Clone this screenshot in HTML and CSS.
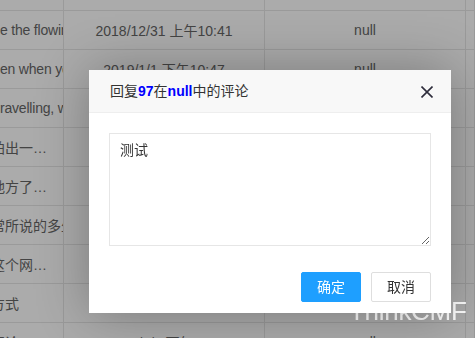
FILE: index.html
```html
<!DOCTYPE html>
<html>
<head>
<meta charset="utf-8">
<link rel="stylesheet" href="styles.css">
</head>
<body>

	<div class="grid">
		<div class="row">
			<div class="cell first"></div><div class="cell">2018/12/30 下午9:12</div><div class="cell">null</div><div class="cell"></div>
		</div>
		<div class="row">
			<div class="cell first">e the flowing</div><div class="cell">2018/12/31 上午10:41</div><div class="cell">null</div><div class="cell"></div>
		</div>
		<div class="row">
			<div class="cell first">en when you</div><div class="cell">2019/1/1 下午10:47</div><div class="cell">null</div><div class="cell"></div>
		</div>
		<div class="row">
			<div class="cell first">ravelling, we</div><div class="cell">2019/1/2 上午9:05</div><div class="cell">null</div><div class="cell"></div>
		</div>
		<div class="row">
			<div class="cell first shift">拍出一…</div><div class="cell">2019/1/3 上午11:20</div><div class="cell">null</div><div class="cell"></div>
		</div>
		<div class="row">
			<div class="cell first shift">地方了…</div><div class="cell">2019/1/4 下午3:18</div><div class="cell">null</div><div class="cell"></div>
		</div>
		<div class="row">
			<div class="cell first shift">常所说的多少</div><div class="cell">2019/1/5 下午4:02</div><div class="cell">null</div><div class="cell"></div>
		</div>
		<div class="row">
			<div class="cell first shift">这个网…</div><div class="cell">2019/1/6 上午8:44</div><div class="cell">null</div><div class="cell"></div>
		</div>
		<div class="row">
			<div class="cell first shift">方式</div><div class="cell">2019/1/7 下午2:36</div><div class="cell">null</div><div class="cell"></div>
		</div>
		<div class="row">
			<div class="cell first shift">评论</div><div class="cell">2019/1/8 下午5:50</div><div class="cell">null</div><div class="cell"></div>
		</div>
	</div>

	<!--
		Shade + watermark
	-->
	<div class="shade"></div>
	<div class="watermark">ThinkCMF</div>

	<!--
		Reply dialog
	-->
	<div class="layer">
		<div class="layer-title">
			回复<b>97</b>在<b>null</b>中的评论
			<a href="#" class="layer-close">
				<svg width="12" height="12" viewBox="0 0 12 12"><path d="M0.5 0.5 L11.5 11.5 M11.5 0.5 L0.5 11.5" stroke="#2e2d3c" stroke-width="1.6" fill="none"/></svg>
			</a>
		</div>
		<div class="layer-content">
			<textarea class="reply">测试</textarea>
		</div>
		<div class="layer-btns">
			<a href="#" class="btn btn-ok">确定</a>
			<a href="#" class="btn">取消</a>
		</div>
	</div>

</body>
</html>
```

FILE: styles.css
```css
body
{
	margin: 0;
	padding: 0;
	background-color: white;
	font-family: "Liberation Sans", "Noto Sans CJK SC", sans-serif;
	font-size: 14px;
	color: #666;
	overflow: hidden;
}

/*
	Table behind the shade
*/
.grid
{
	margin-top: -28px;
}
.row
{
	display: grid;
	grid-template-columns: 64px 201px 201px 1fr;
	height: 39px;
	border-bottom: 1px solid #e6e6e6;
	box-sizing: border-box;
}
.cell
{
	border-right: 1px solid #e6e6e6;
	display: flex;
	align-items: center;
	justify-content: center;
	white-space: nowrap;
	overflow: hidden;
}
.cell.first
{
	justify-content: flex-start;
	letter-spacing: -0.2px;
}
.cell.shift
{
	text-indent: -9px;
	letter-spacing: 0;
}

/*
	Shade
*/
.shade
{
	position: fixed;
	top: 0;
	left: 0;
	width: 100%;
	height: 100%;
	background-color: rgba(0, 0, 0, 0.33);
}
.watermark
{
	position: absolute;
	left: 349px;
	top: 296px;
	font-size: 26px;
	color: white;
	letter-spacing: -0.3px;
}

/*
	Layer
*/
.layer
{
	position: absolute;
	top: 70px;
	left: 89px;
	width: 362px;
	background-color: white;
	box-shadow: 1px 1px 50px rgba(0, 0, 0, 0.3);
}
.layer-title
{
	position: relative;
	height: 42px;
	line-height: 42px;
	padding: 0 80px 0 21px;
	background-color: #f8f8f8;
	border-bottom: 1px solid #eee;
	color: #333;
	font-size: 14px;
}
.layer-title b
{
	color: #00f;
}
.layer-close
{
	position: absolute;
	right: 18px;
	top: 16px;
	width: 12px;
	height: 12px;
	display: flex;
}
.layer-content
{
	padding: 20px 20px 0;
}
.reply
{
	display: block;
	width: 100%;
	height: 113px;
	box-sizing: border-box;
	margin: 0;
	padding: 6px 10px;
	border: 1px solid #e6e6e6;
	font-family: "Liberation Sans", "Noto Sans CJK SC", sans-serif;
	font-size: 14px;
	line-height: 20px;
	color: #333;
	outline: none;
}
.layer-btns
{
	display: flex;
	justify-content: flex-end;
	gap: 10px;
	padding: 26px 20px 11px;
}
.btn
{
	display: block;
	height: 28px;
	line-height: 28px;
	padding: 0 15px;
	border: 1px solid #dedede;
	border-radius: 2px;
	background-color: white;
	color: #333;
	text-decoration: none;
	font-size: 14px;
}
.btn-ok
{
	border-color: #1e9fff;
	background-color: #1e9fff;
	color: white;
}
```
